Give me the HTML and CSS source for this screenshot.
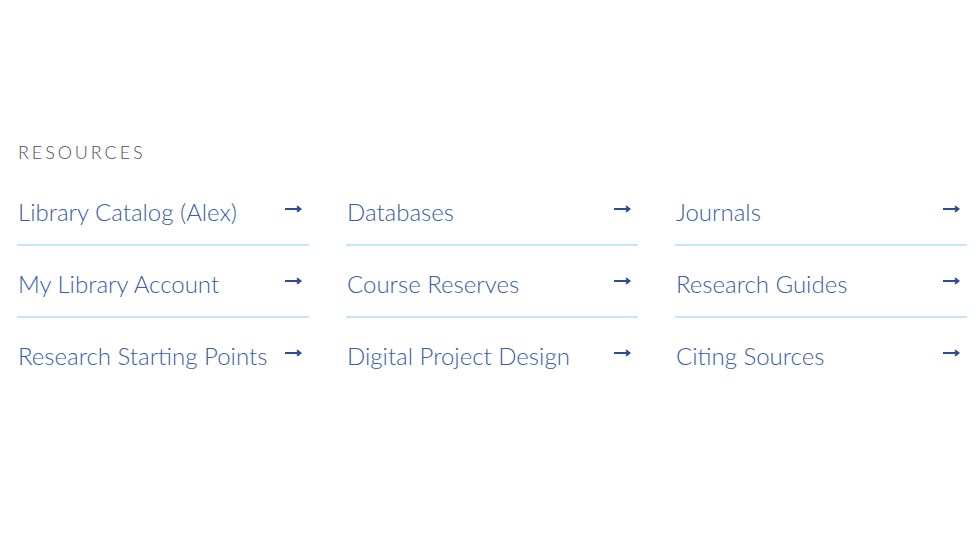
FILE: index.html
```html
<!DOCTYPE html>
<html lang="en">
<head>
<meta charset="utf-8">
<title>Resources</title>
<link rel="stylesheet" href="styles.css">
</head>
<body>
<section class="resources">
  <h2 class="heading">RESOURCES</h2>
  <div class="grid">
    <a class="item" href="#"><span class="label">Library Catalog (Alex)</span><svg class="arrow" viewBox="0 0 17 8" width="17" height="8"><path d="M0 4H15M12 1.2L15.5 4L12 6.8" fill="none" stroke="#2c4c98" stroke-width="2"/></svg></a>
    <a class="item" href="#"><span class="label">Databases</span><svg class="arrow" viewBox="0 0 17 8" width="17" height="8"><path d="M0 4H15M12 1.2L15.5 4L12 6.8" fill="none" stroke="#2c4c98" stroke-width="2"/></svg></a>
    <a class="item" href="#"><span class="label">Journals</span><svg class="arrow" viewBox="0 0 17 8" width="17" height="8"><path d="M0 4H15M12 1.2L15.5 4L12 6.8" fill="none" stroke="#2c4c98" stroke-width="2"/></svg></a>
    <a class="item" href="#"><span class="label">My Library Account</span><svg class="arrow" viewBox="0 0 17 8" width="17" height="8"><path d="M0 4H15M12 1.2L15.5 4L12 6.8" fill="none" stroke="#2c4c98" stroke-width="2"/></svg></a>
    <a class="item" href="#"><span class="label">Course Reserves</span><svg class="arrow" viewBox="0 0 17 8" width="17" height="8"><path d="M0 4H15M12 1.2L15.5 4L12 6.8" fill="none" stroke="#2c4c98" stroke-width="2"/></svg></a>
    <a class="item" href="#"><span class="label">Research Guides</span><svg class="arrow" viewBox="0 0 17 8" width="17" height="8"><path d="M0 4H15M12 1.2L15.5 4L12 6.8" fill="none" stroke="#2c4c98" stroke-width="2"/></svg></a>
    <a class="item last" href="#"><span class="label">Research Starting Points</span><svg class="arrow" viewBox="0 0 17 8" width="17" height="8"><path d="M0 4H15M12 1.2L15.5 4L12 6.8" fill="none" stroke="#2c4c98" stroke-width="2"/></svg></a>
    <a class="item last" href="#"><span class="label">Digital Project Design</span><svg class="arrow" viewBox="0 0 17 8" width="17" height="8"><path d="M0 4H15M12 1.2L15.5 4L12 6.8" fill="none" stroke="#2c4c98" stroke-width="2"/></svg></a>
    <a class="item last" href="#"><span class="label">Citing Sources</span><svg class="arrow" viewBox="0 0 17 8" width="17" height="8"><path d="M0 4H15M12 1.2L15.5 4L12 6.8" fill="none" stroke="#2c4c98" stroke-width="2"/></svg></a>
  </div>
</section>
</body>
</html>
```

FILE: styles.css
```css
html, body {
  margin: 0;
  padding: 0;
  background: #ffffff;
}

body {
  font-family: "Lato", "Open Sans", sans-serif;
}

.resources {
  padding: 140px 13px 0 17px;
}

.heading {
  margin: 0 0 10px 1px;
  font-size: 18px;
  line-height: 24px;
  font-weight: 300;
  letter-spacing: 2.9px;
  color: #505050;
}

.grid {
  display: grid;
  grid-template-columns: repeat(3, 1fr);
  column-gap: 37px;
}

.item {
  display: flex;
  justify-content: space-between;
  align-items: flex-start;
  padding: 24px 7px 18px 1px;
  border-bottom: 2px solid #c4e6fc;
  text-decoration: none;
  color: #3a5ca8;
}

.item.last {
  border-bottom-color: transparent;
}

.label {
  font-size: 24px;
  line-height: 28px;
  font-weight: 300;
}

.arrow {
  margin-top: 7px;
  flex: none;
}
```
